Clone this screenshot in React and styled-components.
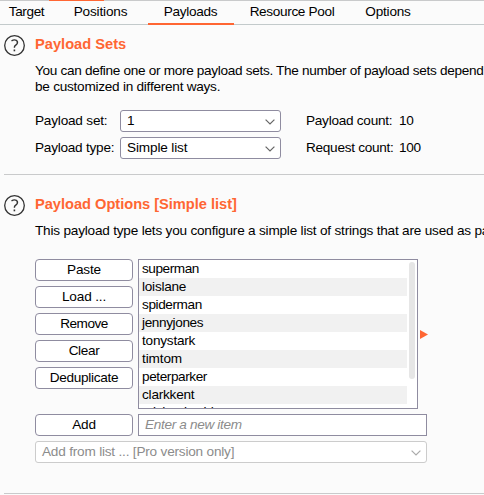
import React from "react";
import styled, { createGlobalStyle } from "styled-components";

const ORANGE = "#ff6633";
const EDGE = "#8f8ca0";
const RULE = "#c9cacb";

const Global = createGlobalStyle`
  *, *::before, *::after { box-sizing: border-box; }
  html, body { margin: 0; height: 100%; overflow: hidden; background: #fbfbfb; }
  button, input { font: inherit; color: inherit; margin: 0; }
`;

const Page = styled.main`
  width: 484px;
  height: 495px;
  overflow: hidden;
  background: #fbfbfb;
  color: #000;
  font: 13.6px/16px "Liberation Sans", Arial, sans-serif;
  white-space: nowrap;
`;

const ParentTabEdge = styled.div`
  height: 1px;
  padding-left: 49px;
  background: ${RULE};
  &::before {
    content: "";
    display: block;
    width: 55px;
    height: 1px;
    background: ${ORANGE};
  }
`;

const Tabs = styled.nav`
  display: flex;
  height: 24px;
  border-bottom: 1px solid #c3cacb;
`;

const Tab = styled.button`
  flex: none;
  width: ${(p) => p.$width}px;
  height: 24px;
  padding: 0 1px 1px 0;
  border: 0;
  border-bottom: 2px solid ${(p) => (p.$active ? ORANGE : "transparent")};
  background: none;
  letter-spacing: ${(p) => p.$track || 0}px;
`;

const Section = styled.section`
  display: grid;
  grid-template-columns: 31px 1fr;
  height: ${(p) => p.$height}px;
  padding-top: ${(p) => p.$top}px;
  margin-left: 4px;
  border-bottom: 1px solid ${RULE};
`;

const HelpIcon = styled.svg`
  width: 21px;
  height: 21px;
`;

const Title = styled.h2`
  margin: 1px 0 0;
  color: ${ORANGE};
  font-size: 14.67px;
  line-height: 16px;
  letter-spacing: ${(p) => p.$track || 0}px;
`;

const Copy = styled.p`
  margin: 11px 0 0;
`;

const Line = styled.span`
  display: block;
  letter-spacing: ${(p) => p.$track || 0}px;
`;

const Fields = styled.div`
  display: grid;
  grid-template-columns: 85px 161px 25px 93px auto;
  grid-auto-rows: 22px;
  row-gap: 5px;
  margin-top: 15px;
  line-height: 22px;
`;

const Label = styled.span`
  grid-column: ${(p) => p.$col};
  letter-spacing: ${(p) => p.$track || 0}px;
`;

const Select = styled.div`
  display: flex;
  align-items: center;
  justify-content: space-between;
  height: 22px;
  padding: 0 5px 0 6px;
  border: 1px solid ${(p) => (p.$disabled ? "#cccccc" : EDGE)};
  border-radius: 3px;
  background: #fff;
  color: ${(p) => (p.$disabled ? "#8c8c8c" : "#000")};
  line-height: 20px;
  letter-spacing: ${(p) => p.$track || 0}px;
`;

const ChevronIcon = styled.svg`
  width: 10px;
  height: 6px;
  margin-top: 2px;
`;

const Editor = styled.div`
  display: grid;
  grid-template-columns: 98px 280px 9px;
  column-gap: 5px;
  margin-top: 20px;
`;

const Actions = styled.div`
  display: flex;
  flex-direction: column;
  gap: 5px;
`;

const Button = styled.button`
  width: 98px;
  height: 22px;
  padding: 0;
  border: 1px solid ${EDGE};
  border-radius: 4px;
  background: #fff;
  line-height: 20px;
  letter-spacing: ${(p) => p.$track || 0}px;
`;

const ListBox = styled.div`
  display: flex;
  height: 150px;
  border: 1px solid ${EDGE};
  background: #fff;
  overflow: hidden;
`;

const Items = styled.ul`
  width: 268px;
  margin: 0;
  padding: 0;
  list-style: none;
`;

const Item = styled.li`
  height: 18px;
  padding-left: 3px;
  line-height: 18px;
  letter-spacing: ${(p) => p.$track || 0}px;
  &:nth-child(even) { background: #f1f1f1; }
  &:last-child { line-height: 16px; }
`;

const ScrollThumb = styled.div`
  width: 6px;
  height: 117px;
  margin: 2px 0 0 2px;
  border-radius: 3px;
  background: #e6e6e6;
`;

const ArrowIcon = styled.svg`
  width: 8px;
  height: 9px;
  margin: 71px 0 0 -3px;
`;

const AddRow = styled.div`
  display: flex;
  gap: 5px;
  margin: 5px 0;
`;

const Input = styled.input`
  width: 289px;
  height: 22px;
  padding: 0 6px 1px;
  border: 1px solid ${EDGE};
  border-radius: 0;
  background: #fff;
  letter-spacing: ${(p) => p.$track || 0}px;
  &::placeholder { color: #8c8c8c; opacity: 1; font-style: italic; }
`;

const PresetRow = styled.div`
  width: 392px;
`;

function Help() {
  return (
    <HelpIcon viewBox="0 0 21 21" fill="none" stroke="#333" strokeWidth="1.3" aria-label="Help">
      <circle cx="10.5" cy="10.5" r="9.8" />
      <path d="M7.5 5.9 Q10.2 4.3 12.3 5.3 Q14.2 6.7 13 8.8 Q12.3 9.8 11.2 10.6 Q10.4 11.2 10.4 12.8" strokeWidth="1.4" />
      <path d="M10.4 14.5 V16.3" strokeWidth="1.6" />
    </HelpIcon>
  );
}

function Chevron({ color = "#666" }) {
  return (
    <ChevronIcon viewBox="0 0 10 6" fill="none" stroke={color} strokeWidth="1.2">
      <path d="M.6 .6 L5 5 L9.4 .6" />
    </ChevronIcon>
  );
}

const TABS = [
  ["Target", 54, -0.37],
  ["Positions", 94, -0.16],
  ["Payloads", 86, -0.28],
  ["Resource Pool", 117, -0.34],
  ["Options", 75, -0.2],
];

const ACTIONS = [
  ["Paste", -0.2],
  ["Load ...", -0.15],
  ["Remove", -0.5],
  ["Clear", -0.35],
  ["Deduplicate", -0.32],
];

const ITEMS = [
  ["superman", -0.44],
  ["loislane", -0.24],
  ["spiderman", -0.4],
  ["jennyjones", -0.38],
  ["tonystark", -0.22],
  ["timtom", -0.12],
  ["peterparker", -0.42],
  ["clarkkent", -0.22],
  ["michaelwald", -0.3],
];

export default function App() {
  return (
    <Page>
      <Global />
      <ParentTabEdge />
      <Tabs>
        {TABS.map(([name, width, track]) => (
          <Tab key={name} $width={width} $track={track} $active={name === "Payloads"}>{name}</Tab>
        ))}
      </Tabs>

      <Section $height={150} $top={10}>
        <Help />
        <div>
          <Title>Payload Sets</Title>
          <Copy>
            <Line $track={-0.313}>You can define one or more payload sets. The number of payload sets depend</Line>
            <Line $track={-0.25}>be customized in different ways.</Line>
          </Copy>
          <Fields>
            <Label $col={1} $track={-0.2}>Payload set:</Label>
            <Select>1<Chevron /></Select>
            <Label $col={4} $track={-0.26}>Payload count:</Label>
            <Label $col={5} $track={-0.28}>10</Label>
            <Label $col={1} $track={-0.24}>Payload type:</Label>
            <Select $track={-0.14}>Simple list<Chevron /></Select>
            <Label $col={4} $track={-0.28}>Request count:</Label>
            <Label $col={5} $track={-0.28}>100</Label>
          </Fields>
        </div>
      </Section>

      <Section $height={319} $top={20}>
        <Help />
        <div>
          <Title $track={-0.03}>Payload Options [Simple list]</Title>
          <Copy>
            <Line $track={-0.205}>This payload type lets you configure a simple list of strings that are used as pa</Line>
          </Copy>
          <Editor>
            <Actions>
              {ACTIONS.map(([name, track]) => <Button key={name} $track={track}>{name}</Button>)}
            </Actions>
            <ListBox>
              <Items>
                {ITEMS.map(([name, track]) => <Item key={name} $track={track}>{name}</Item>)}
              </Items>
              <ScrollThumb />
            </ListBox>
            <ArrowIcon viewBox="0 0 8 9" fill={ORANGE}><path d="M0 0 L8 4.5 L0 9 Z" /></ArrowIcon>
          </Editor>
          <AddRow>
            <Button $track={-0.25}>Add</Button>
            <Input placeholder="Enter a new item" $track={-0.33} />
          </AddRow>
          <PresetRow>
            <Select $disabled $track={-0.2}>Add from list ... [Pro version only]<Chevron color="#aaa" /></Select>
          </PresetRow>
        </div>
      </Section>
    </Page>
  );
}
